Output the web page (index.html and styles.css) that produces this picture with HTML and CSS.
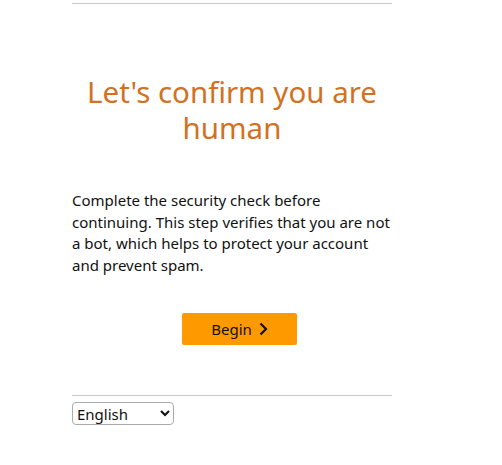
FILE: index.html
```html
<!DOCTYPE html>
<html lang="en">
<head>
    <meta charset="UTF-8">
    <meta name="viewport" content="width=device-width, initial-scale=1.0">
    <title>Security Check</title>
    <link rel="stylesheet" href="styles.css">
</head>
<body>
    <div class="page">
        <div class="divider top"></div>

        <h1 class="title">Let's confirm you are human</h1>

        <p class="info">Complete the security check before continuing. This step verifies that you are not a bot, which helps to protect your account and prevent spam.</p>

        <div class="actions">
            <button class="begin">Begin
                <svg class="chevron" width="10" height="14" viewBox="0 0 10 14">
                    <path d="M2.5 1.5 L8 7 L2.5 12.5" fill="none" stroke="#111" stroke-width="2.2"/>
                </svg>
            </button>
        </div>

        <div class="divider bottom"></div>

        <select class="lang">
            <option>English</option>
        </select>
    </div>
</body>
</html>
```

FILE: styles.css
```css
/* Page */
body {
    margin: 0;
    background: #ffffff;
    color: #111111;
    font-family: "Noto Sans", Arial, sans-serif;
}

.page {
    width: 320px;
    margin-left: 72px;
    padding-top: 3px;
}

/* Thin grey rules */
.divider {
    height: 1px;
    background: #cccccc;
}

/* Heading */
.title {
    margin: 70px 0 0;
    font-size: 29.5px;
    font-weight: 400;
    line-height: 36px;
    text-align: center;
    color: #d2711f;
}

/* Text block */
.info {
    margin: 44px 0 0;
    font-size: 15px;
    line-height: 21.5px;
}

/* Begin button */
.actions {
    display: flex;
    justify-content: center;
    margin-top: 37px;
    padding-left: 15px;
}

.begin {
    display: flex;
    align-items: center;
    justify-content: center;
    gap: 6px;
    width: 115px;
    height: 32px;
    border: none;
    border-radius: 2px;
    background: #ff9900;
    color: #111111;
    font-family: inherit;
    font-size: 15px;
    cursor: pointer;
}

.divider.bottom {
    margin-top: 50px;
}

/* Language select */
.lang {
    margin-top: 6px;
    width: 102px;
    height: 23px;
    font-family: inherit;
    font-size: 15px;
    color: #111111;
    border: 1px solid #aaaaaa;
    border-radius: 4px;
    background: #ffffff;
}
```
